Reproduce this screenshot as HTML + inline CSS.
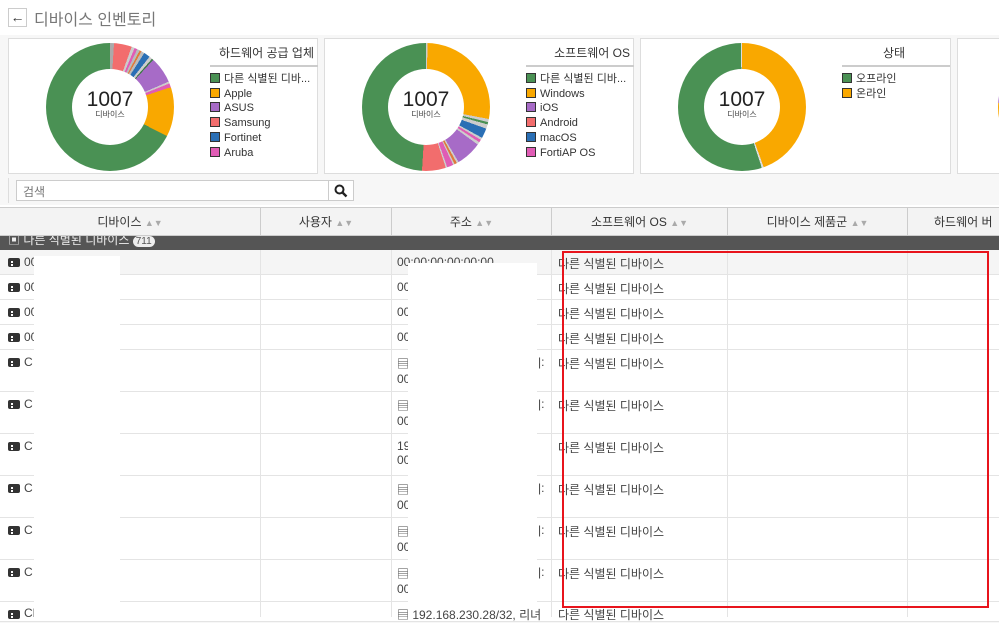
<!DOCTYPE html>
<html><head><meta charset="utf-8"><style>
*{box-sizing:border-box;margin:0;padding:0}
body{width:999px;height:617px;overflow:hidden;background:#f7f7f7;font-family:"Liberation Sans","Noto Sans CJK KR",sans-serif;color:#333;position:relative;font-size:12px}
.a{position:absolute}
.box{position:absolute;top:38px;height:136px;background:#fff;border:1px solid #ddd}
.donut{position:absolute;width:128px;height:128px;border-radius:50%;top:4px;left:37px}
.donut .hole{position:absolute;left:26px;top:26px;width:76px;height:76px;border-radius:50%;background:#fff;text-align:center}
.hole b{display:block;font-weight:normal;font-size:21px;color:#222;margin-top:21px;line-height:20px}
.hole i{display:block;font-style:normal;font-size:8px;color:#444;line-height:10px}
.lg{position:absolute;left:201px;top:3px;width:108px}
.lg h4{font-weight:normal;font-size:12px;text-align:right;padding:2px 4px 4px 0;border-bottom:2px solid #ccc;color:#333;margin-bottom:5px}
.lg div{font-size:11px;line-height:14.7px;white-space:nowrap;overflow:hidden;color:#333}
.lg span{display:inline-block;width:10px;height:10px;border:1px solid #333;margin-right:4px;vertical-align:-1px}
.th{position:absolute;top:207px;height:29px;background:#f3f3f3;border-right:1px solid #ccc;border-top:1px solid #ccc;border-bottom:1px solid #ccc;text-align:center;line-height:28px;font-size:12px;color:#333}
.srt{color:#aaa;font-size:9px}
.row{position:absolute;left:0;width:999px;border-bottom:1px solid #e4e4e4;background:#fff}
.vl{position:absolute;top:250px;bottom:0;width:1px;background:#e4e4e4}
.ic{position:absolute;left:8px;width:12px;height:9px;background:#333;border-radius:2px}
.ic:after{content:"";position:absolute;left:3px;top:3px;width:6px;height:3px;border-left:2px dotted #fff}
.t{position:absolute;font-size:12px;color:#444;white-space:nowrap}
</style></head><body>
<div class="a" style="left:0;top:0;width:999px;height:35px;background:#fff"></div>
<div class="a" style="left:8px;top:8px;width:19px;height:19px;border:1px solid #ccc;background:#fff;font-size:14px;font-weight:bold;text-align:center;line-height:16px">&#8592;</div>
<div class="a" style="left:34px;top:6px;font-size:16px;color:#777">디바이스 인벤토리</div>

<div class="box" style="left:8px;width:310px">
 <div class="donut" style="background:conic-gradient(#aaa 0 1%,#f26d6d 1% 5.5%,#ccc 5.5% 6.3%,#e05cb5 6.3% 7%,#bbb 7% 7.7%,#e07a3a 7.7% 8.2%,#bbb 8.2% 9%,#2a6fb5 9% 10.6%,#ccc 10.6% 11.4%,#3f7a4a 11.4% 11.8%,#a76bc7 11.8% 18.5%,#ccc 18.5% 19%,#e05cb5 19% 20%,#f9a800 20% 32.5%,#4a9154 32.5% 100%)"><div class="hole"><b>1007</b><i>디바이스</i></div></div>
 <div class="lg"><h4>하드웨어 공급 업체</h4>
 <div><span style="background:#4a9154"></span>다른 식별된 디바...</div><div><span style="background:#f9a800"></span>Apple</div><div><span style="background:#a76bc7"></span>ASUS</div><div><span style="background:#f26d6d"></span>Samsung</div><div><span style="background:#2a6fb5"></span>Fortinet</div><div><span style="background:#e05cb5"></span>Aruba</div></div>
</div>
<div class="box" style="left:324px;width:310px">
 <div class="donut" style="background:conic-gradient(#ccc 0 0.4%,#f9a800 0.4% 28%,#ccc 28% 28.8%,#4a9154 28.8% 29.4%,#ccc 29.4% 30.5%,#2a6fb5 30.5% 33%,#ccc 33% 33.6%,#e05cb5 33.6% 34.3%,#ccc 34.3% 35%,#a76bc7 35% 41.5%,#ccc 41.5% 42%,#e07a3a 42% 42.6%,#ccc 42.6% 43%,#e05cb5 43% 44.6%,#ccc 44.6% 45%,#f26d6d 45% 51%,#4a9154 51% 100%)"><div class="hole"><b>1007</b><i>디바이스</i></div></div>
 <div class="lg"><h4>소프트웨어 OS</h4>
 <div><span style="background:#4a9154"></span>다른 식별된 디바...</div><div><span style="background:#f9a800"></span>Windows</div><div><span style="background:#a76bc7"></span>iOS</div><div><span style="background:#f26d6d"></span>Android</div><div><span style="background:#2a6fb5"></span>macOS</div><div><span style="background:#e05cb5"></span>FortiAP OS</div></div>
</div>
<div class="box" style="left:640px;width:311px">
 <div class="donut" style="background:conic-gradient(#f9a800 0.3% 44.5%,#ddd 44.5% 45%,#4a9154 45% 99.7%,#ddd 99.7%)"><div class="hole"><b>1007</b><i>디바이스</i></div></div>
 <div class="lg"><h4 style="text-align:center">상태</h4>
 <div><span style="background:#4a9154"></span>오프라인</div><div><span style="background:#f9a800"></span>온라인</div></div>
</div>
<div class="box" style="left:957px;width:60px;overflow:hidden"><div class="a" style="left:40px;top:4px;width:128px;height:128px;border-radius:50%;background:conic-gradient(#4a9154 0 50%,#f9a800 50% 76%,#a76bc7 76% 82%,#4a9154 82%)"><div class="a" style="left:26px;top:26px;width:76px;height:76px;border-radius:50%;background:#fff"></div></div></div>

<div class="a" style="left:8px;top:178px;width:1px;height:25px;background:#ddd"></div>
<div class="a" style="left:16px;top:180px;width:313px;height:21px;background:#fff;border:1px solid #ccc;font-size:12px;color:#777;padding:2px 6px">검색</div>
<div class="a" style="left:328px;top:180px;width:26px;height:21px;background:#fff;border:1px solid #ccc;text-align:center">
<svg width="14" height="14" viewBox="0 0 14 14" style="margin-top:3px"><circle cx="5.5" cy="5.5" r="4" fill="none" stroke="#222" stroke-width="2"/><path d="M8.5 8.5L12.5 12.5" stroke="#222" stroke-width="2.4"/></svg></div>

<div class="a" style="left:0;top:205px;width:999px;height:412px;background:#fff"></div>
<div class="th" style="left:0;width:261px">디바이스 <span class="srt">&#9650;&#9660;</span></div>
<div class="th" style="left:261px;width:131px">사용자 <span class="srt">&#9650;&#9660;</span></div>
<div class="th" style="left:392px;width:160px">주소 <span class="srt">&#9650;&#9660;</span></div>
<div class="th" style="left:552px;width:176px">소프트웨어 OS <span class="srt">&#9650;&#9660;</span></div>
<div class="th" style="left:728px;width:180px">디바이스 제품군 <span class="srt">&#9650;&#9660;</span></div>
<div class="th" style="left:908px;width:100px;text-align:left;padding-left:26px">하드웨어 버</div>
<div class="a" style="left:0;top:236px;width:999px;height:14px;background:#555;overflow:hidden;color:#eee;font-size:12px;line-height:8px;padding-left:8px">&#9635; 다른 식별된 디바이스 <span style="background:#eee;color:#555;border-radius:6px;padding:0 3px;font-size:10px">711</span></div>

<div class="row" style="top:250px;height:25px;background:#f5f5f5"></div>
<div class="row" style="top:275px;height:25px"></div>
<div class="row" style="top:300px;height:25px"></div>
<div class="row" style="top:325px;height:25px"></div>
<div class="row" style="top:350px;height:42px"></div>
<div class="row" style="top:392px;height:42px"></div>
<div class="row" style="top:434px;height:42px"></div>
<div class="row" style="top:476px;height:42px"></div>
<div class="row" style="top:518px;height:42px"></div>
<div class="row" style="top:560px;height:42px"></div>
<div class="row" style="top:602px;height:20px"></div>
<div class="vl" style="left:260px"></div><div class="vl" style="left:391px"></div><div class="vl" style="left:551px"></div><div class="vl" style="left:727px"></div><div class="vl" style="left:907px"></div>

<div class="ic" style="top:258px"></div><div class="t" style="left:24px;top:255px">00</div><div class="t" style="left:397px;top:255px">00:00:00:00:00:00</div>
<div class="ic" style="top:283px"></div><div class="t" style="left:24px;top:280px">00</div><div class="t" style="left:397px;top:280px">00</div>
<div class="ic" style="top:308px"></div><div class="t" style="left:24px;top:305px">00</div><div class="t" style="left:397px;top:305px">00</div>
<div class="ic" style="top:333px"></div><div class="t" style="left:24px;top:330px">00</div><div class="t" style="left:397px;top:330px">00</div>
<div class="ic" style="top:358px"></div><div class="t" style="left:24px;top:355px">C</div><div class="t" style="left:397px;top:355px">&#9636;<br>00</div>
<div class="ic" style="top:400px"></div><div class="t" style="left:24px;top:397px">C</div><div class="t" style="left:397px;top:397px">&#9636;<br>00</div>
<div class="ic" style="top:442px"></div><div class="t" style="left:24px;top:439px">C</div><div class="t" style="left:397px;top:439px">19<br>00</div>
<div class="ic" style="top:484px"></div><div class="t" style="left:24px;top:481px">C</div><div class="t" style="left:397px;top:481px">&#9636;<br>00</div>
<div class="ic" style="top:526px"></div><div class="t" style="left:24px;top:523px">C</div><div class="t" style="left:397px;top:523px">&#9636;<br>00</div>
<div class="ic" style="top:568px"></div><div class="t" style="left:24px;top:565px">C</div><div class="t" style="left:397px;top:565px">&#9636;<br>00</div>
<div class="ic" style="top:610px"></div><div class="t" style="left:24px;top:606px">CDR-N2-6</div><div class="t" style="left:397px;top:606px">&#9636; 192.168.230.28/32, 리녀</div>

<div class="t" style="left:558px;top:255px">다른 식별된 디바이스</div>
<div class="t" style="left:558px;top:280px">다른 식별된 디바이스</div>
<div class="t" style="left:558px;top:305px">다른 식별된 디바이스</div>
<div class="t" style="left:558px;top:330px">다른 식별된 디바이스</div>
<div class="t" style="left:558px;top:355px">다른 식별된 디바이스</div>
<div class="t" style="left:558px;top:397px">다른 식별된 디바이스</div>
<div class="t" style="left:558px;top:439px">다른 식별된 디바이스</div>
<div class="t" style="left:558px;top:481px">다른 식별된 디바이스</div>
<div class="t" style="left:558px;top:523px">다른 식별된 디바이스</div>
<div class="t" style="left:558px;top:565px">다른 식별된 디바이스</div>
<div class="t" style="left:558px;top:606px">다른 식별된 디바이스</div>
<div class="t" style="left:538px;top:355px">|:</div><div class="t" style="left:538px;top:397px">|:</div><div class="t" style="left:538px;top:481px">|:</div><div class="t" style="left:538px;top:523px">|:</div><div class="t" style="left:538px;top:565px">|:</div>

<div class="a" style="left:34px;top:256px;width:86px;height:361px;background:#fff"></div>
<div class="a" style="left:408px;top:263px;width:129px;height:340px;background:#fff"></div>
<div class="a" style="left:562px;top:251px;width:427px;height:357px;border:2px solid #e8141c"></div>
</body></html>
